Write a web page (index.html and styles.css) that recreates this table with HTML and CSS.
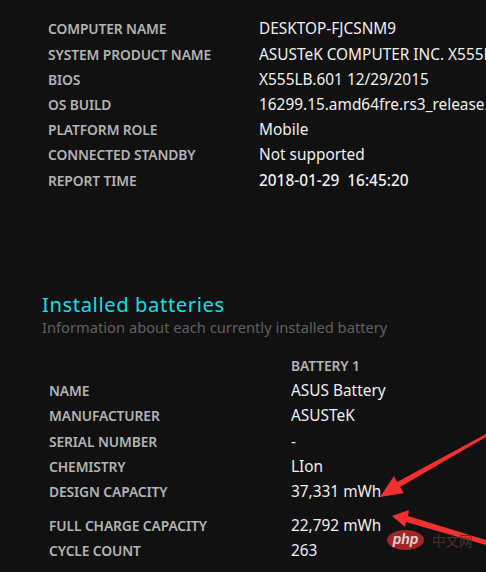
FILE: index.html
```html
<!DOCTYPE html>
<html>
<head>
<meta charset="utf-8">
<link rel="stylesheet" href="styles.css">
</head>
<body>
<div class="page">
  <div class="grid info">
    <div class="lbl">COMPUTER NAME</div><div class="val">DESKTOP-FJCSNM9</div>
    <div class="lbl">SYSTEM PRODUCT NAME</div><div class="val">ASUSTeK COMPUTER INC. X555LB</div>
    <div class="lbl">BIOS</div><div class="val">X555LB.601 12/29/2015</div>
    <div class="lbl">OS BUILD</div><div class="val">16299.15.amd64fre.rs3_release.17</div>
    <div class="lbl">PLATFORM ROLE</div><div class="val">Mobile</div>
    <div class="lbl">CONNECTED STANDBY</div><div class="val">Not supported</div>
    <div class="lbl">REPORT TIME</div><div class="val strong">2018-01-29&nbsp;&nbsp;16:45:20</div>
  </div>

  <h2 class="title">Installed batteries</h2>
  <div class="subtitle">Information about each currently installed battery</div>

  <div class="grid batt">
    <div class="lbl"></div><div class="lbl">BATTERY 1</div>
    <div class="lbl">NAME</div><div class="val">ASUS Battery</div>
    <div class="lbl">MANUFACTURER</div><div class="val">ASUSTeK</div>
    <div class="lbl">SERIAL NUMBER</div><div class="val">-</div>
    <div class="lbl">CHEMISTRY</div><div class="val">LIon</div>
    <div class="lbl">DESIGN CAPACITY</div><div class="val">37,331 mWh</div>
    <div class="lbl gap">FULL CHARGE CAPACITY</div><div class="val gap">22,792 mWh</div>
    <div class="lbl">CYCLE COUNT</div><div class="val">263</div>
  </div>

  <svg class="arrows" width="486" height="572" viewBox="0 0 486 572">
    <polygon points="486,434 397,482 394,476 380,497 404,493 400,487 486,437" fill="#f4302f"/>
    <polygon points="486,540 408,516 409,510 392,516 405,527 406,522 486,545" fill="#f4302f"/>
  </svg>

  <div class="watermark">
    <span class="php">php</span><span class="cn">中文网</span>
  </div>
</div>
</body>
</html>
```
FILE: styles.css
```css
html, body {
  margin: 0;
  padding: 0;
  background: #111111;
  overflow: hidden;
}
.page {
  position: relative;
  width: 486px;
  height: 572px;
  overflow: hidden;
  font-family: "Noto Sans", "Open Sans", sans-serif;
}
.grid {
  display: grid;
  grid-auto-rows: 25.2px;
  white-space: nowrap;
  align-items: center;
}
.info {
  margin: 16.4px 0 0 48px;
  grid-template-columns: 211px 1fr;
}
.batt {
  margin: 16.4px 0 0 49px;
  grid-template-columns: 242px 1fr;
  grid-template-rows: repeat(6, 25.2px) 34.2px 25.2px;
}
.lbl {
  color: #b4b4b4;
  font-weight: 600;
  font-size: 13.8px;
  letter-spacing: -0.1px;
  line-height: 25.2px;
}
.val {
  color: #f0f0f0;
  font-size: 15.4px;
  font-weight: 400;
  line-height: 25.2px;
  overflow: hidden;
}
.val.strong {
  font-weight: 500;
}
.gap {
  align-self: end;
}
.title {
  margin: 98px 0 0 42px;
  font-size: 20.2px;
  font-weight: 400;
  color: #14dde6;
  letter-spacing: 0.6px;
  line-height: 26px;
}
.subtitle {
  margin: 0 0 0 42px;
  font-size: 14.7px;
  color: #606060;
  line-height: 20px;
}
.arrows {
  position: absolute;
  left: 0;
  top: 0;
}
.watermark {
  position: absolute;
  left: 387px;
  top: 530px;
  display: flex;
  align-items: center;
  gap: 8px;
}
.php {
  display: inline-block;
  width: 37px;
  height: 20px;
  border-radius: 50%;
  background: #a32627;
  color: #d6d6d6;
  font-style: italic;
  font-weight: 700;
  font-size: 14px;
  line-height: 19px;
  text-align: center;
  font-family: "Liberation Sans", sans-serif;
}
.cn {
  color: #4e3030;
  font-size: 13.5px;
  line-height: 20px;
  font-family: "Noto Sans CJK SC", sans-serif;
}
```
